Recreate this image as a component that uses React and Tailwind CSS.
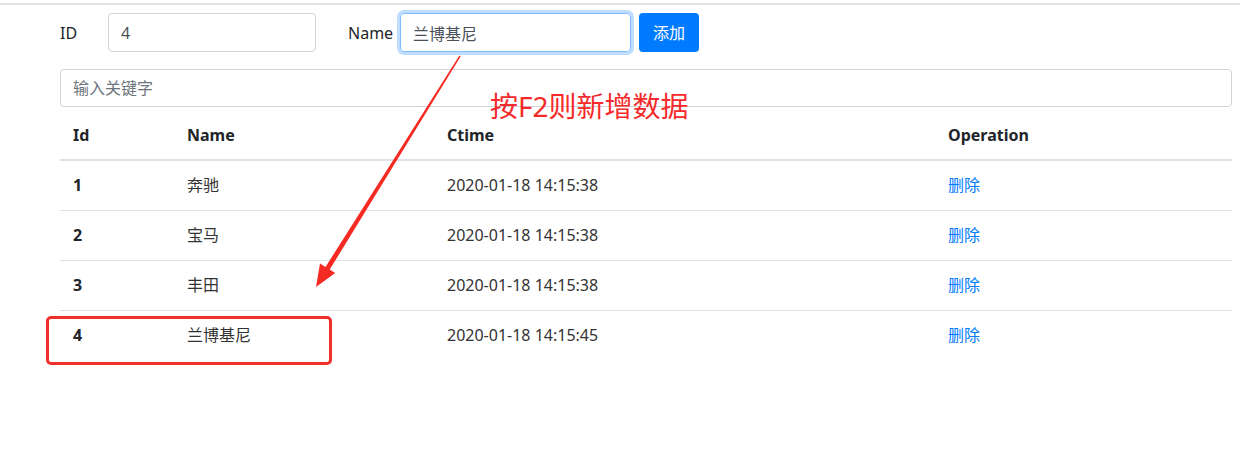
import React from 'react';

const rows = [
  { id: 1, name: '奔驰', ctime: '2020-01-18 14:15:38' },
  { id: 2, name: '宝马', ctime: '2020-01-18 14:15:38' },
  { id: 3, name: '丰田', ctime: '2020-01-18 14:15:38' },
  { id: 4, name: '兰博基尼', ctime: '2020-01-18 14:15:45' },
];

const App = () => {
  return (
    <div
      className="relative w-[1240px] h-[452px] bg-white overflow-hidden text-[16px] text-[#212529]"
      style={{ fontFamily: '"Noto Sans", "Noto Sans CJK SC", sans-serif' }}
    >
      {/* top edge */}
      <div className="pt-[3px]">
        <div className="h-[2px] bg-[#e2e2e2]" />
      </div>

      <div className="pl-[60px] pr-[8px]">
        {/* add form */}
        <div className="flex items-center mt-[8px] h-[39px]">
          <label className="w-[48px] text-[#212529]">ID</label>
          <input
            readOnly
            value="4"
            className="w-[208px] h-[39px] px-[12px] border border-[#ced4da] rounded-[4px] text-[#495057] outline-none"
          />
          <label className="ml-[32px] w-[52px] text-[#212529]">Name</label>
          <input
            readOnly
            value="兰博基尼"
            className="w-[231px] h-[39px] px-[12px] border border-[#80bdff] rounded-[4px] text-[#495057] outline-none shadow-[0_0_0_3px_rgba(0,123,255,0.25)]"
          />
          <button className="ml-[8px] w-[60px] h-[39px] rounded-[4px] bg-[#007bff] text-white">
            添加
          </button>
        </div>

        {/* search */}
        <input
          readOnly
          placeholder="输入关键字"
          className="mt-[17px] w-full h-[38px] px-[12px] border border-[#ced4da] rounded-[4px] text-[#495057] placeholder:text-[#6c757d] outline-none"
        />

        {/* table */}
        <table className="w-full mt-[3px] border-collapse text-left">
          <thead>
            <tr className="h-[50px] border-b-2 border-[#dee2e6]">
              <th className="w-[115px] px-[13px] font-bold">Id</th>
              <th className="w-[260px] px-[12px] font-bold">Name</th>
              <th className="w-[501px] px-[12px] font-bold">Ctime</th>
              <th className="px-[12px] font-bold">Operation</th>
            </tr>
          </thead>
          <tbody>
            {rows.map((r, i) => (
              <tr key={r.id} className={`h-[50px] ${i > 0 ? 'border-t border-[#dee2e6]' : ''}`}>
                <td className="px-[13px] font-bold">{r.id}</td>
                <td className="px-[12px] text-[#333]">{r.name}</td>
                <td className="px-[12px] text-[#333]">{r.ctime}</td>
                <td className="px-[12px]">
                  <a className="text-[#007bff] cursor-pointer">删除</a>
                </td>
              </tr>
            ))}
          </tbody>
        </table>
      </div>

      {/* annotation overlay */}
      <div className="absolute left-[490px] top-[88px] text-[28px] leading-[36px] text-[#f52a2a] whitespace-nowrap">
        按F2则新增数据
      </div>
      <svg className="absolute left-0 top-0 pointer-events-none" width="1240" height="452">
        <polygon
          fill="#f52a22"
          points="459.4,55.6 460.6,56.4 329.7,269.6 335.2,273.1 316,287 320,263.5 325.5,267"
        />
      </svg>
      <div className="absolute left-[46px] top-[316px] w-[286px] h-[49px] border-[3px] border-[#f0302a] rounded-[5px]" />
    </div>
  );
};

export default App;
